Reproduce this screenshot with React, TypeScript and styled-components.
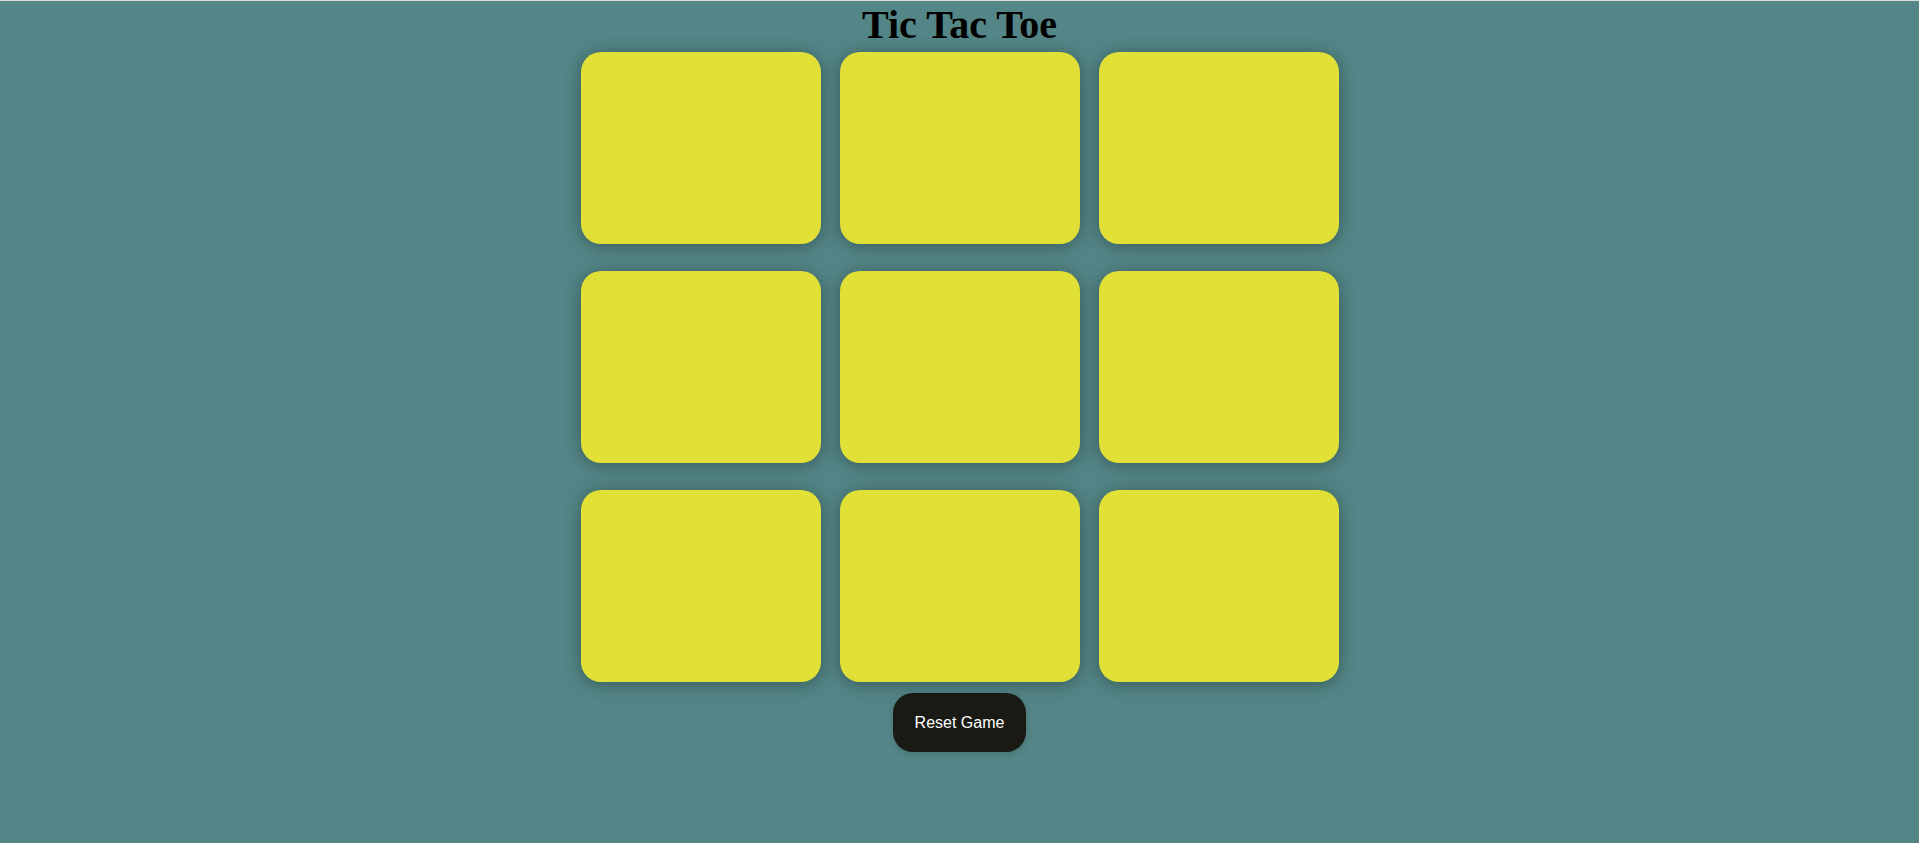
import { FC, useState } from "react";
import styled, { createGlobalStyle } from "styled-components";

const GlobalStyle = createGlobalStyle`
    html, body {
        margin: 0;
        padding: 0;
        background: #548687;
    }
    #root {
        min-height: 100vh;
    }
`;

const Page = styled.div`
    min-height: 842px;
    border-top: 1px solid #dcdcdc;
    background: #548687;
    display: flex;
    flex-direction: column;
    align-items: center;
`;

const Title = styled.h1`
    margin: 0;
    padding-top: 1px;
    font-family: "Liberation Serif", "Times New Roman", serif;
    font-weight: bold;
    font-size: 40px;
    line-height: 45px;
    color: #000;
`;

const Board = styled.div`
    margin-top: 5px;
    display: grid;
    grid-template-columns: repeat(3, 240px);
    grid-auto-rows: 192px;
    column-gap: 19px;
    row-gap: 27px;
`;

const Cell = styled.button`
    border: none;
    padding: 0;
    background: #e0e037;
    border-radius: 20px;
    box-shadow: 0 2px 18px rgba(0, 0, 0, 0.35);
    font-family: "Liberation Sans", Arial, sans-serif;
    font-size: 96px;
    font-weight: bold;
    color: #1a1a14;
    cursor: pointer;
`;

const ResetButton = styled.button`
    margin-top: 11px;
    border: none;
    padding: 20px 22px;
    background: #1a1a14;
    color: #fff;
    border-radius: 20px;
    font-family: "Liberation Sans", Arial, sans-serif;
    font-size: 16px;
    line-height: 19px;
    cursor: pointer;
    box-shadow: 0 2px 6px rgba(0, 0, 0, 0.15);
`;

const App: FC = () => {
    const [cells, setCells] = useState<string[]>(Array(9).fill(""));
    const [turn, setTurn] = useState<"X" | "O">("X");

    const play = (i: number) => {
        if (cells[i]) return;
        const next = [...cells];
        next[i] = turn;
        setCells(next);
        setTurn(turn === "X" ? "O" : "X");
    };

    const reset = () => {
        setCells(Array(9).fill(""));
        setTurn("X");
    };

    return (
        <>
            <GlobalStyle />
            <Page>
                <Title>Tic Tac Toe</Title>
                <Board>
                    {cells.map((c, i) => (
                        <Cell key={i} onClick={() => play(i)}>{c}</Cell>
                    ))}
                </Board>
                <ResetButton onClick={reset}>Reset Game</ResetButton>
            </Page>
        </>
    );
};

export default App;
